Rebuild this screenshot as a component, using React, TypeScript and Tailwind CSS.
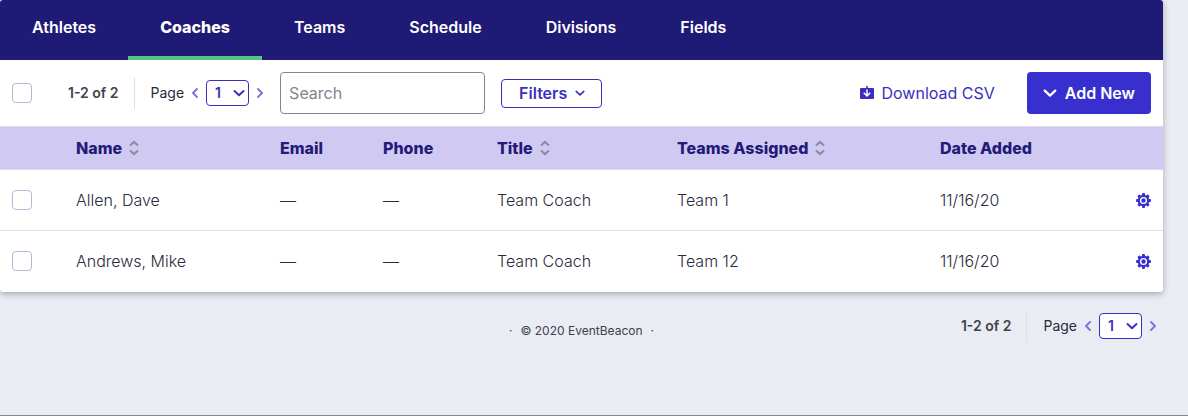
const tabs = ['Athletes', 'Coaches', 'Teams', 'Schedule', 'Divisions', 'Fields'];

const columns = [
    { label: 'Name', sortable: true },
    { label: 'Email', sortable: false },
    { label: 'Phone', sortable: false },
    { label: 'Title', sortable: true },
    { label: 'Teams Assigned', sortable: true },
    { label: 'Date Added', sortable: false },
];

const coaches = [
    { name: 'Allen, Dave', title: 'Team Coach', team: 'Team 1', added: '11/16/20' },
    { name: 'Andrews, Mike', title: 'Team Coach', team: 'Team 12', added: '11/16/20' },
];

function Chevron({ d, className }: { d: string; className: string }) {
    return (
        <svg viewBox="0 0 12 12" className={className} fill="none" stroke="currentColor" strokeWidth="2" strokeLinecap="round" strokeLinejoin="round" aria-hidden="true">
            <path d={d} />
        </svg>
    );
}

const DOWN = 'M1.5 4 L6 8.2 L10.5 4';
const LEFT = 'M6 2 L2 6 L6 10';
const RIGHT = 'M4 2 L8 6 L4 10';

function SortIcon() {
    return (
        <svg viewBox="0 0 10 16" className="h-4 w-[10px] text-[#8f8ca0]" fill="none" stroke="currentColor" strokeWidth="2.2" aria-hidden="true">
            <path d="M1 5.5 L5 2 L9 5.5 M1 10.5 L5 14 L9 10.5" />
        </svg>
    );
}

function DownloadIcon() {
    return (
        <svg viewBox="0 0 14 14" className="h-[14px] w-[14px]" aria-hidden="true">
            <path fill="currentColor" d="M1 2 H13 Q14 2 14 3 V12 Q14 13 13 13 H1 Q0 13 0 12 V3 Q0 2 1 2 Z" />
            <path fill="none" stroke="currentColor" strokeWidth="1.6" d="M7 0 V4" />
            <path fill="none" stroke="#fff" strokeWidth="1.5" d="M7 3.4 V10 M3.8 6.8 L7 10 L10.2 6.8" />
        </svg>
    );
}

function GearIcon() {
    return (
        <svg viewBox="-7 -7 14 14" className="h-[15px] w-[15px]" fill="currentColor" aria-hidden="true">
            {[0, 45, 90, 135].map((angle) => (
                <rect key={angle} x="-1.4" y="-6.9" width="2.8" height="13.8" rx="0.8" transform={`rotate(${angle})`} />
            ))}
            <circle r="5.4" />
            <circle r="2.7" fill="none" stroke="#fff" strokeWidth="1.3" />
        </svg>
    );
}

function Checkbox({ label }: { label: string }) {
    return (
        <input
            type="checkbox"
            aria-label={label}
            className="block h-5 w-5 shrink-0 appearance-none rounded-[4px] border border-[#b4b8d2] bg-white checked:bg-[#3730cf]"
        />
    );
}

function Pager({ id }: { id: string }) {
    return (
        <div className="flex items-center text-sm text-[#2b2a3a]">
            <span className="font-semibold text-[#42404f]">1-2 of 2</span>
            <div className="mr-4 ml-[15px] h-8 w-px bg-[#dcdee8]"></div>
            <label htmlFor={id}>Page</label>
            <button aria-label="Previous page" className="ml-[3px] py-1 pr-[3px] pl-1 text-[#7f75dc]">
                <Chevron d={LEFT} className="h-3 w-3" />
            </button>
            <div className="relative text-[#3a30bd]">
                <select id={id} className="block h-[26px] w-[43px] appearance-none rounded-[4px] border border-current bg-white pl-2 text-sm font-semibold">
                    <option>1</option>
                </select>
                <Chevron d={DOWN} className="pointer-events-none absolute top-[7px] right-1 h-3 w-3" />
            </div>
            <button aria-label="Next page" className="ml-[5px] py-1 text-[#7f75dc]">
                <Chevron d={RIGHT} className="h-3 w-3" />
            </button>
        </div>
    );
}

export default function App() {
    return (
        <div className="min-h-screen border-b border-[#85868c] bg-[#e9ecf2] pr-[25px] font-['Inter',sans-serif] text-base">
            <main className="overflow-hidden rounded-[3px] bg-white shadow-[0_2px_6px_rgba(40,40,60,0.35)]">
                <nav className="flex h-[60px] bg-[#1f1a75] text-white">
                    {tabs.map((tab) => (
                        <a
                            key={tab}
                            href="#"
                            className={
                                tab === 'Coaches'
                                    ? 'flex items-center border-b-4 border-[#53c67f] px-8 pb-[2px] font-extrabold'
                                    : 'flex items-center px-8 pb-[6px] font-semibold'
                            }
                        >
                            {tab}
                        </a>
                    ))}
                </nav>

                <div className="flex items-center px-3 py-3">
                    <Checkbox label="Select all coaches" />
                    <div className="ml-9">
                        <Pager id="page-top" />
                    </div>
                    <input
                        type="text"
                        placeholder="Search"
                        aria-label="Search"
                        className="ml-[14px] h-[42px] w-[205px] rounded-[4px] border border-[#85839a] px-2 text-[#2b2a3a] placeholder:text-[#85848f]"
                    />
                    <button className="ml-4 flex h-[29px] items-center gap-2 rounded-[4px] border border-[#3a30bd] pr-4 pl-[17px] font-semibold text-[#3a30bd]">
                        Filters
                        <Chevron d={DOWN} className="h-[10px] w-[10px]" />
                    </button>
                    <a href="#" className="ml-auto flex items-center gap-2 text-[#3a30bd]">
                        <DownloadIcon />
                        Download CSV
                    </a>
                    <button className="ml-8 flex h-[42px] items-center gap-2 rounded-[4px] bg-[#3730cf] px-4 font-semibold text-white">
                        <Chevron d={DOWN} className="h-[14px] w-[14px]" />
                        Add New
                    </button>
                </div>

                <table className="w-full table-fixed border-collapse text-left">
                    <colgroup>
                        <col className="w-[64px]" />
                        <col className="w-[204px]" />
                        <col className="w-[103px]" />
                        <col className="w-[114px]" />
                        <col className="w-[180px]" />
                        <col className="w-[263px]" />
                        <col className="w-[187px]" />
                        <col className="w-[48px]" />
                    </colgroup>
                    <thead>
                        <tr className="h-[43px] border-y border-[#dcdce8] bg-[#d0caf3] text-[#241a78]">
                            <td></td>
                            {columns.map((column) => (
                                <th key={column.label} className="px-3 font-extrabold">
                                    {column.sortable ? (
                                        <button className="flex items-center gap-[7px]">
                                            {column.label}
                                            <SortIcon />
                                        </button>
                                    ) : (
                                        column.label
                                    )}
                                </th>
                            ))}
                            <td></td>
                        </tr>
                    </thead>
                    <tbody className="font-light text-[#2b2a3a]">
                        {coaches.map((coach) => (
                            <tr key={coach.name} className="h-[61px] border-b border-[#dcdee8] last:border-b-0">
                                <td className="px-3">
                                    <Checkbox label={`Select ${coach.name}`} />
                                </td>
                                <td className="px-3">{coach.name}</td>
                                <td className="px-3">—</td>
                                <td className="px-3">—</td>
                                <td className="px-3">{coach.title}</td>
                                <td className="px-3">{coach.team}</td>
                                <td className="px-3">{coach.added}</td>
                                <td className="px-3">
                                    <button aria-label={`Settings for ${coach.name}`} className="ml-auto block text-[#3730cf]">
                                        <GearIcon />
                                    </button>
                                </td>
                            </tr>
                        ))}
                    </tbody>
                </table>
            </main>

            <footer className="grid grid-cols-[1fr_auto_1fr] items-center pt-[18px]">
                <div></div>
                <p className="flex gap-2 pt-[10px] text-xs text-[#42404f]">
                    <span>·</span>
                    <span>© 2020 EventBeacon</span>
                    <span>·</span>
                </p>
                <div className="justify-self-end pr-1">
                    <Pager id="page-bottom" />
                </div>
            </footer>
        </div>
    );
}
